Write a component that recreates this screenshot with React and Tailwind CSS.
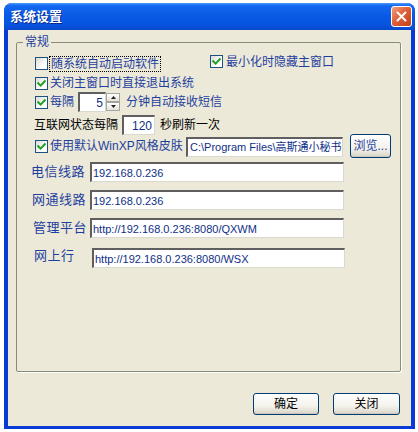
import React from "react";

const blue = "text-[#1f3f9f]";

const CheckBox = ({ checked, className = "" }) => (
  <span
    className={`w-[13px] h-[13px] shrink-0 flex items-center justify-center border border-[#1c5180] bg-[linear-gradient(135deg,#dcdcd5,#ffffff_70%)] ${className}`}
  >
    {checked && (
      <svg width="9" height="9" viewBox="0 0 9 9">
        <path d="M1.2 4.2 L3.6 6.6 L7.8 2.2" fill="none" stroke="#21a121" strokeWidth="2" strokeLinecap="square" />
      </svg>
    )}
  </span>
);

const Field = ({ value, className = "" }) => (
  <div
    className={`h-[20px] bg-white border-t-2 border-l-2 border-r border-b border-t-[#5f5f5f] border-l-[#5f5f5f] border-r-[#d9d9d0] border-b-[#d9d9d0] flex items-center pl-[1px] text-[11px] text-[#0f2f86] font-['Liberation_Sans','Noto_Sans_CJK_SC',sans-serif] overflow-hidden whitespace-nowrap ${className}`}
  >
    {value}
  </div>
);

const XpButton = ({ children, className = "" }) => (
  <button
    className={`rounded-[3px] border border-[#003c74] bg-[linear-gradient(to_bottom,#ffffff,#f4f2ec_60%,#d9d4c8)] shadow-[inset_0_-1px_0_#cdc7ba] flex items-center justify-center text-[12px] whitespace-nowrap ${className}`}
  >
    {children}
  </button>
);

const Label = ({ children, className = "" }) => (
  <span className={`text-[13px] tracking-[0.5px] leading-[16px] ${blue} ${className}`}>{children}</span>
);

export default function App() {
  return (
    <div className="w-[418px] h-[432px] bg-white pt-[3px] pl-[4px] font-['Liberation_Sans','Noto_Sans_CJK_SC',sans-serif] text-[12px] leading-[14px]">
      <div className="w-[411px] h-[426px] rounded-t-[8px] overflow-hidden bg-[#0a3ad6] flex flex-col">
        {/* title bar */}
        <div className="h-[27px] shrink-0 flex items-center justify-between pl-[6px] pr-[3px] bg-[linear-gradient(to_bottom,#4a9afc_0%,#1468ee_10%,#0a5ae6_45%,#0653e0_80%,#0a48cc_100%)]">
          <span className="text-white font-bold text-[13px] [text-shadow:1px_1px_0_#0a2a8c]">系统设置</span>
          <div className="w-[21px] h-[21px] rounded-[3px] border border-white bg-[linear-gradient(135deg,#f0a080,#e0603a_45%,#c0401a)] flex items-center justify-center">
            <svg width="11" height="11" viewBox="0 0 11 11">
              <path d="M1.5 1.5 L9.5 9.5 M9.5 1.5 L1.5 9.5" stroke="white" strokeWidth="2" strokeLinecap="round" />
            </svg>
          </div>
        </div>

        {/* body */}
        <div className="flex-1 mx-[4px] mb-[3px] bg-[#ece9d8] flex flex-col">
          <div className="relative mt-[12px] ml-[8px] w-[385px] h-[330px] border border-[#8b8b7b] rounded-[2px] shadow-[1px_1px_0_#ffffff]">
            <span className={`absolute left-[6px] -top-[8px] px-[2px] bg-[#ece9d8] ${blue}`}>常规</span>

            <div className="flex flex-col pt-[12px]">
              {/* row 1 */}
              <div className="h-[17px] flex items-start pl-[18px]">
                <div className="w-[175px] flex items-start">
                  <CheckBox className="mt-[2px]" />
                  <span className={`ml-[1px] mt-[1px] px-[1px] border border-dotted border-black ${blue}`}>随系统自动启动软件</span>
                </div>
                <CheckBox checked />
                <span className={`ml-[3px] ${blue}`}>最小化时隐藏主窗口</span>
              </div>

              {/* row 2 */}
              <div className="h-[16px] mt-[3px] flex items-center pl-[18px]">
                <CheckBox checked />
                <span className={`ml-[2px] ${blue}`}>关闭主窗口时直接退出系统</span>
              </div>

              {/* row 3 */}
              <div className="h-[18px] mt-[2px] flex items-center pl-[18px]">
                <CheckBox checked />
                <span className={`ml-[2px] ${blue}`}>每隔</span>
                <Field value="5" className="ml-[4px] w-[28px] h-[18px] justify-end pr-[2px] text-[12px]" />
                <div className="w-[14px] h-[18px] flex flex-col">
                  <div className="h-[9px] border border-[#a5a5a0] bg-[linear-gradient(to_bottom,#ffffff,#e4e2da)] flex items-center justify-center">
                    <svg width="5" height="3" viewBox="0 0 5 3"><path d="M0 3 L2.5 0 L5 3Z" fill="#222" /></svg>
                  </div>
                  <div className="h-[9px] border border-[#a5a5a0] bg-[linear-gradient(to_bottom,#ffffff,#e4e2da)] flex items-center justify-center">
                    <svg width="5" height="3" viewBox="0 0 5 3"><path d="M0 0 L2.5 3 L5 0Z" fill="#222" /></svg>
                  </div>
                </div>
                <span className={`ml-[6px] ${blue}`}>分钟自动接收短信</span>
              </div>

              {/* row 4 */}
              <div className="h-[16px] mt-[6px] flex items-center pl-[17px]">
                <span className="text-black">互联网状态每隔</span>
                <Field value="120" className="ml-[4px] w-[33px] h-[16px] justify-end pr-[2px] text-[12px]" />
                <span className="ml-[5px] text-black">秒刷新一次</span>
              </div>

              {/* row 5 */}
              <div className="h-[24px] mt-[1px] flex items-center pl-[18px]">
                <CheckBox checked />
                <span className={`ml-[2px] w-[136px] ${blue}`}>使用默认WinXP风格皮肤</span>
                <Field value="C:\Program Files\高斯通小秘书" className="w-[157px] h-[18px] mt-[1px] pl-[2px]" />
                <XpButton className={`ml-[7px] w-[41px] h-[24px] ${blue}`}>浏览...</XpButton>
              </div>

              {/* line fields */}
              <div className="h-[20px] mt-[4px] flex items-center pl-[14px]">
                <Label className="w-[59px]">电信线路</Label>
                <Field value="192.168.0.236" className="w-[254px]" />
              </div>
              <div className="h-[20px] mt-[8px] flex items-center pl-[15px]">
                <Label className="w-[58px]">网通线路</Label>
                <Field value="192.168.0.236" className="w-[254px]" />
              </div>
              <div className="h-[20px] mt-[8px] flex items-center pl-[16px]">
                <Label className="w-[57px]">管理平台</Label>
                <Field value="http://192.168.0.236:8080/QXWM" className="w-[254px]" />
              </div>
              <div className="h-[20px] mt-[10px] flex items-center pl-[17px]">
                <Label className="w-[58px] -mt-[4px]">网上行</Label>
                <Field value="http://192.168.0.236:8080/WSX" className="w-[253px]" />
              </div>
            </div>
          </div>

          {/* buttons */}
          <div className="mt-[21px] flex justify-end gap-[14px] pr-[11px]">
            <XpButton className="w-[66px] h-[22px] text-black">确定</XpButton>
            <XpButton className="w-[67px] h-[22px] text-black">关闭</XpButton>
          </div>
        </div>
      </div>
    </div>
  );
}
